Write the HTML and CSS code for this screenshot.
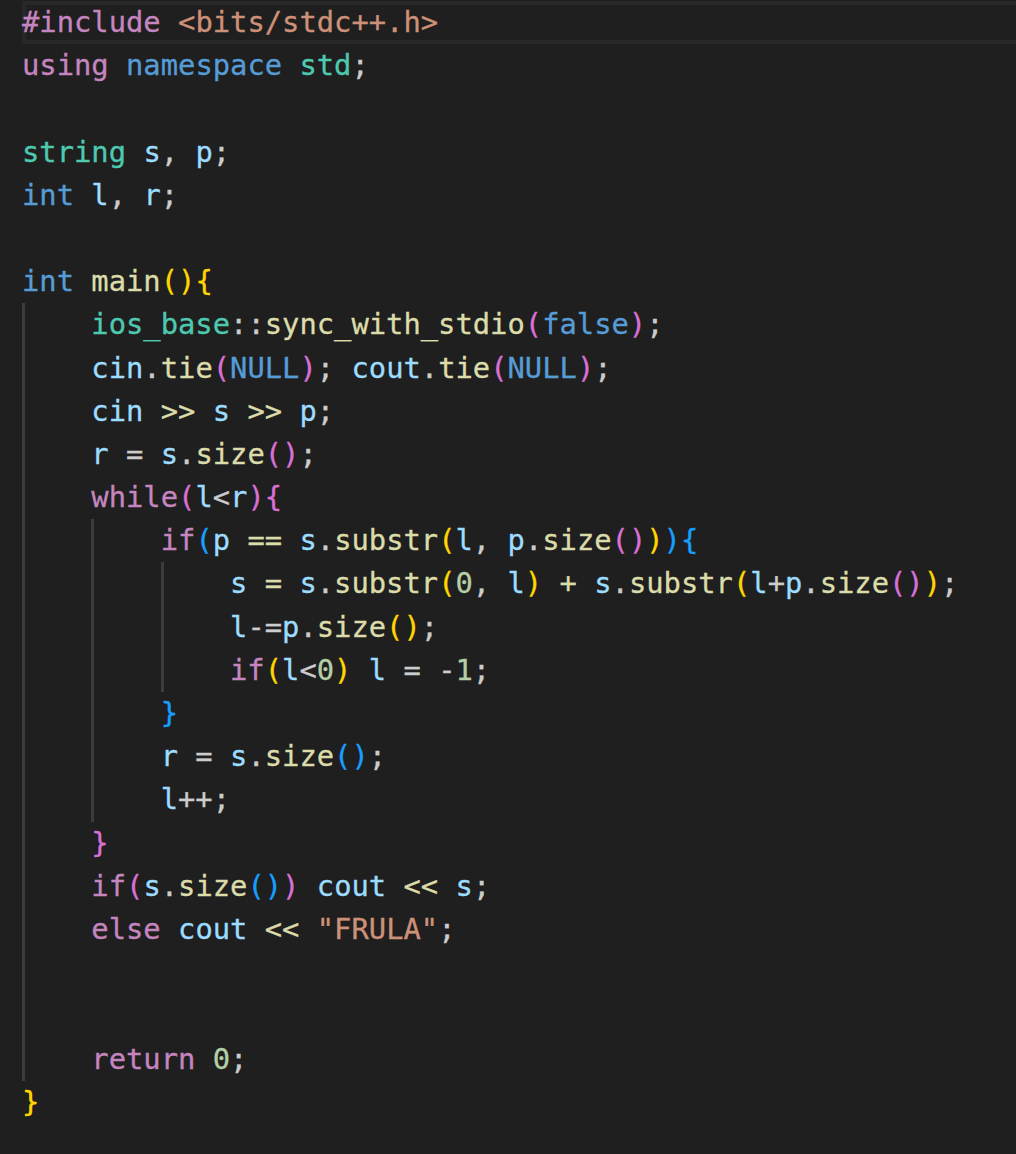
FILE: index.html
```html
<!DOCTYPE html>
<html>
<head>
<meta charset="utf-8">
<link rel="stylesheet" href="styles.css">
</head>
<body>
<div class="editor">
<div class="line current"><span class="kw">#include</span> <span class="str">&lt;bits/stdc++.h&gt;</span></div>
<div class="line"><span class="kw">using</span> <span class="st">namespace</span> <span class="ty">std</span>;</div>
<div class="line"></div>
<div class="line"><span class="ty">string</span> <span class="var">s</span>, <span class="var">p</span>;</div>
<div class="line"><span class="st">int</span> <span class="var">l</span>, <span class="var">r</span>;</div>
<div class="line"></div>
<div class="line"><span class="st">int</span> <span class="fn">main</span><span class="b1">(){</span></div>
<div class="line"><span class="ind"></span><span class="ty">ios_base</span>::<span class="fn">sync_with_stdio</span><span class="b2">(</span><span class="st">false</span><span class="b2">)</span>;</div>
<div class="line"><span class="ind"></span><span class="var">cin</span>.<span class="fn">tie</span><span class="b2">(</span><span class="st">NULL</span><span class="b2">)</span>; <span class="var">cout</span>.<span class="fn">tie</span><span class="b2">(</span><span class="st">NULL</span><span class="b2">)</span>;</div>
<div class="line"><span class="ind"></span><span class="var">cin</span> <span class="fn">&gt;&gt;</span> <span class="var">s</span> <span class="fn">&gt;&gt;</span> <span class="var">p</span>;</div>
<div class="line"><span class="ind"></span><span class="var">r</span> = <span class="var">s</span>.<span class="fn">size</span><span class="b2">()</span>;</div>
<div class="line"><span class="ind"></span><span class="kw">while</span><span class="b2">(</span><span class="var">l</span>&lt;<span class="var">r</span><span class="b2">){</span></div>
<div class="line"><span class="ind"></span><span class="ind"></span><span class="kw">if</span><span class="b3">(</span><span class="var">p</span> <span class="fn">==</span> <span class="var">s</span>.<span class="fn">substr</span><span class="b1">(</span><span class="var">l</span>, <span class="var">p</span>.<span class="fn">size</span><span class="b2">()</span><span class="b1">)</span><span class="b3">){</span></div>
<div class="line"><span class="ind"></span><span class="ind"></span><span class="ind"></span><span class="var">s</span> <span class="fn">=</span> <span class="var">s</span>.<span class="fn">substr</span><span class="b1">(</span><span class="num">0</span>, <span class="var">l</span><span class="b1">)</span> <span class="fn">+</span> <span class="var">s</span>.<span class="fn">substr</span><span class="b1">(</span><span class="var">l</span>+<span class="var">p</span>.<span class="fn">size</span><span class="b2">()</span><span class="b1">)</span>;</div>
<div class="line"><span class="ind"></span><span class="ind"></span><span class="ind"></span><span class="var">l</span>-=<span class="var">p</span>.<span class="fn">size</span><span class="b1">()</span>;</div>
<div class="line"><span class="ind"></span><span class="ind"></span><span class="ind"></span><span class="kw">if</span><span class="b1">(</span><span class="var">l</span>&lt;<span class="num">0</span><span class="b1">)</span> <span class="var">l</span> = -<span class="num">1</span>;</div>
<div class="line"><span class="ind"></span><span class="ind"></span><span class="b3">}</span></div>
<div class="line"><span class="ind"></span><span class="ind"></span><span class="var">r</span> = <span class="var">s</span>.<span class="fn">size</span><span class="b3">()</span>;</div>
<div class="line"><span class="ind"></span><span class="ind"></span><span class="var">l</span>++;</div>
<div class="line"><span class="ind"></span><span class="b2">}</span></div>
<div class="line"><span class="ind"></span><span class="kw">if</span><span class="b2">(</span><span class="var">s</span>.<span class="fn">size</span><span class="b3">()</span><span class="b2">)</span> <span class="var">cout</span> <span class="fn">&lt;&lt;</span> <span class="var">s</span>;</div>
<div class="line"><span class="ind"></span><span class="kw">else</span> <span class="var">cout</span> <span class="fn">&lt;&lt;</span> <span class="str">"FRULA"</span>;</div>
<div class="line"><span class="ind"></span></div>
<div class="line"><span class="ind"></span></div>
<div class="line"><span class="ind"></span><span class="kw">return</span> <span class="num">0</span>;</div>
<div class="line"><span class="b1">}</span></div>
</div>
</body>
</html>
```

FILE: styles.css
```css
html, body {
  margin: 0;
  padding: 0;
  background: #1f1f1f;
}

.editor {
  padding: 1px 0 0 22px;
  font-family: "DejaVu Sans Mono", "Liberation Mono", monospace;
  font-size: 28.8px;
  line-height: 43.2px;
  color: #cccccc;
  -webkit-text-stroke: 0.3px currentColor;
  overflow: hidden;
  min-height: 1153px;
}

.line {
  height: 43.2px;
  white-space: pre;
  width: calc(100% + 20px);
  overflow: visible;
}

.line.current {
  box-shadow: inset 0 0 0 4px #282828;
}

.ind {
  display: inline-block;
  box-sizing: border-box;
  width: 4ch;
  height: 43.2px;
  vertical-align: top;
  border-left: 3px solid #3c3c3c;
}

.kw { color: #c586c0; }
.str { color: #ce9178; }
.st { color: #569cd6; }
.ty { color: #4ec9b0; }
.var { color: #9cdcfe; }
.fn { color: #dcdcaa; }
.num { color: #b5cea8; }
.b1 { color: #ffd700; }
.b2 { color: #da70d6; }
.b3 { color: #179fff; }
```
